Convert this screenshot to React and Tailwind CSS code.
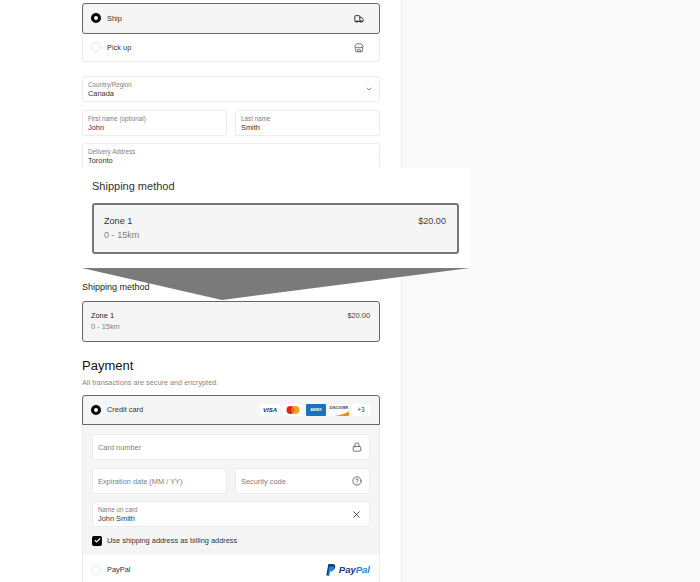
import React from 'react';
import { ChevronDown, Lock, CircleHelp, X, Check, Truck, Store } from 'lucide-react';

function Radio({ checked }) {
    if (checked) {
        return <span className="block w-[10px] h-[10px] rounded-full border-[3px] border-black bg-white" />;
    }
    return <span className="block w-[10px] h-[10px] rounded-full border border-[#e8e8e8] bg-white" />;
}

function Field({ label, value, placeholder, icon, className = '' }) {
    return (
        <div className={`flex items-center justify-between h-[26px] bg-white border border-[#ececec] rounded-[3px] pl-[5px] pr-[7px] ${className}`}>
            {placeholder ? (
                <span className="pt-[1px] text-[7.4px] text-[#808080]">{placeholder}</span>
            ) : (
                <div className="flex flex-col">
                    <span className="text-[6.3px] leading-[8px] text-[#808080]">{label}</span>
                    <span className="text-[7.4px] leading-[9px] text-[#333]">{value}</span>
                </div>
            )}
            {icon}
        </div>
    );
}

function ShippingCard({ large }) {
    if (large) {
        return (
            <div className="flex justify-between h-[51px] bg-[#f5f5f5] border-2 border-[#777] rounded-[3px] pl-[10px] pr-[11px] pt-[10px]">
                <div>
                    <div className="text-[9.1px] leading-[13px] text-[#333]">Zone 1</div>
                    <div className="text-[9.1px] leading-[13px] mt-[1px] text-[#808080]">0 - 15km</div>
                </div>
                <div className="text-[9.1px] leading-[13px] text-[#444]">$20.00</div>
            </div>
        );
    }
    return (
        <div className="flex justify-between h-[41px] bg-[#f5f5f5] border border-[#666] rounded-[3px] pl-[8px] pr-[9px] pt-[9px]">
            <div>
                <div className="text-[7.4px] leading-[10px] text-[#222]">Zone 1</div>
                <div className="text-[7.4px] leading-[10px] mt-[1px] text-[#808080]">0 - 15km</div>
            </div>
            <div className="text-[7.4px] leading-[10px] text-[#444]">$20.00</div>
        </div>
    );
}

function Visa() {
    return (
        <div className="flex items-center justify-center w-[20px] h-[12px] bg-white rounded-[1px]">
            <span className="text-[6px] font-bold italic text-[#1a2a6c]">VISA</span>
        </div>
    );
}

function Mastercard() {
    return (
        <div className="w-[20px] h-[12px] bg-white rounded-[1px]">
            <svg width="20" height="12" viewBox="0 0 20 12">
                <circle cx="7.5" cy="6" r="4" fill="#e2231a" />
                <circle cx="12.5" cy="6" r="4" fill="#f79e1b" />
                <path d="M10 2.9a4 4 0 0 1 0 6.2a4 4 0 0 1 0-6.2z" fill="#f2661b" />
            </svg>
        </div>
    );
}

function Amex() {
    return (
        <div className="flex items-center justify-center w-[20px] h-[12px] bg-[#1d6fc0] rounded-[1px]">
            <span className="text-[4px] leading-[4px] font-bold text-white text-center">AMEX</span>
        </div>
    );
}

function Discover() {
    return (
        <div className="relative w-[20px] h-[12px] bg-white rounded-[1px] overflow-hidden">
            <span className="block text-[3.5px] leading-[9px] font-bold text-center text-[#333]">DISCOVER</span>
            <svg className="absolute left-0 top-0" width="20" height="12" viewBox="0 0 20 12">
                <path d="M6 12C12 11 17 9 20 7.5V12z" fill="#ef8a1e" />
            </svg>
        </div>
    );
}

export default function App() {
    return (
        <div className="relative w-[700px] h-[582px] overflow-hidden bg-[#fafafa] font-['Liberation_Sans',Arial,sans-serif]">
            <div className="w-[402px] h-full bg-white border-r border-[#ececec] pl-[82px] pr-[21px] pt-[3px]">
                {/* delivery choice */}
                <div className="flex items-center justify-between h-[31px] bg-[#f5f5f5] border border-[#666] rounded-[3px] pl-[8px] pr-[15px]">
                    <div className="flex items-center gap-[6px]">
                        <Radio checked />
                        <span className="text-[7.4px] text-[#333]">Ship</span>
                    </div>
                    <Truck size={10} strokeWidth={2.2} className="text-[#222]" />
                </div>
                <div className="flex items-center justify-between h-[28px] border border-t-0 border-[#ececec] rounded-b-[3px] pl-[8px] pr-[15px]">
                    <div className="flex items-center gap-[6px]">
                        <Radio />
                        <span className="text-[7.4px] text-[#333]">Pick up</span>
                    </div>
                    <Store size={10} className="text-[#555]" />
                </div>

                {/* address */}
                <Field
                    className="mt-[14px]"
                    label="Country/Region"
                    value="Canada"
                    icon={<ChevronDown size={8} strokeWidth={2} className="text-[#555] -mr-[1px]" />}
                />
                <div className="grid grid-cols-2 gap-[8px] mt-[8px]">
                    <Field label="First name (optional)" value="John" />
                    <Field label="Last name" value="Smith" />
                </div>
                <Field className="mt-[7px]" label="Delivery Address" value="Toronto" />

                {/* shipping */}
                <div className="mt-[112px] text-[9px] leading-[12px] text-[#222]">Shipping method</div>
                <div className="mt-[8px]">
                    <ShippingCard />
                </div>

                {/* payment */}
                <div className="mt-[16px] text-[13px] leading-[16px] text-[#111]">Payment</div>
                <div className="mt-[3px] text-[7.3px] leading-[12px] text-[#888]">All transactions are secure and encrypted.</div>
                <div className="flex items-center justify-between h-[30px] mt-[6px] bg-[#f5f5f5] border border-[#666] rounded-t-[3px] pl-[8px] pr-[9px]">
                    <div className="flex items-center gap-[6px]">
                        <Radio checked />
                        <span className="text-[7.4px] text-[#333]">Credit card</span>
                    </div>
                    <div className="flex items-center gap-[3px]">
                        <Visa />
                        <Mastercard />
                        <Amex />
                        <Discover />
                        <div className="flex items-center justify-center w-[18px] h-[12px] bg-white rounded-[1px] text-[6.5px] text-[#444]">+3</div>
                    </div>
                </div>
                <div className="bg-[#f5f5f5] border-x border-[#ececec] px-[9px] pt-[9px] h-[130px]">
                    <Field
                        placeholder="Card number"
                        icon={<Lock size={10} className="text-[#555]" />}
                    />
                    <div className="grid grid-cols-2 gap-[8px] mt-[8px]">
                        <Field placeholder="Expiration date (MM / YY)" />
                        <Field
                            placeholder="Security code"
                            icon={<CircleHelp size={10} className="text-[#555]" />}
                        />
                    </div>
                    <Field
                        className="mt-[7px]"
                        label="Name on card"
                        value="John Smith"
                        icon={<X size={11} className="text-[#444]" />}
                    />
                    <div className="flex items-center gap-[5px] mt-[8px]">
                        <span className="flex items-center justify-center w-[10px] h-[10px] bg-black rounded-[2px]">
                            <Check size={7} strokeWidth={4} className="text-white" />
                        </span>
                        <span className="text-[7.4px] text-[#333]">Use shipping address as billing address</span>
                    </div>
                </div>
                <div className="flex items-center justify-between h-[30px] border-x border-[#ececec] pl-[8px] pr-[9px]">
                    <div className="flex items-center gap-[6px]">
                        <Radio />
                        <span className="text-[7.4px] text-[#333]">PayPal</span>
                    </div>
                    <div className="flex items-center gap-[3px]">
                        <svg width="10" height="12" viewBox="0 0 10 12">
                            <path d="M2.3 0H6.5C8.6 0 9.6 1.2 9.2 3.2C8.8 5.5 7.2 6.6 5.1 6.6H3.7L3 11.5H0.3z" fill="#1a3a7c" />
                            <path d="M3.4 2.5H7.8C8.8 4.8 7.2 7.6 4.8 7.6H3.9L3.2 12H1.8z" fill="#1f87cf" />
                        </svg>
                        <span className="text-[9.5px] font-bold italic text-[#1a3a7c] leading-[12px]">
                            Pay<span className="text-[#1f87cf]">Pal</span>
                        </span>
                    </div>
                </div>
            </div>

            {/* magnified callout over the page */}
            <div className="absolute left-[82px] top-[168px] w-[388px] h-[100px] bg-white px-[10px] pt-[11px]">
                <div className="text-[11px] leading-[14px] text-[#333]">Shipping method</div>
                <div className="mt-[10px] w-[367px]">
                    <ShippingCard large />
                </div>
            </div>
            <svg className="absolute left-[82px] top-[268px]" width="388" height="32" viewBox="0 0 388 32">
                <polygon points="0,0 388,0 140,32" fill="#7a7a7a" />
            </svg>
        </div>
    );
}
